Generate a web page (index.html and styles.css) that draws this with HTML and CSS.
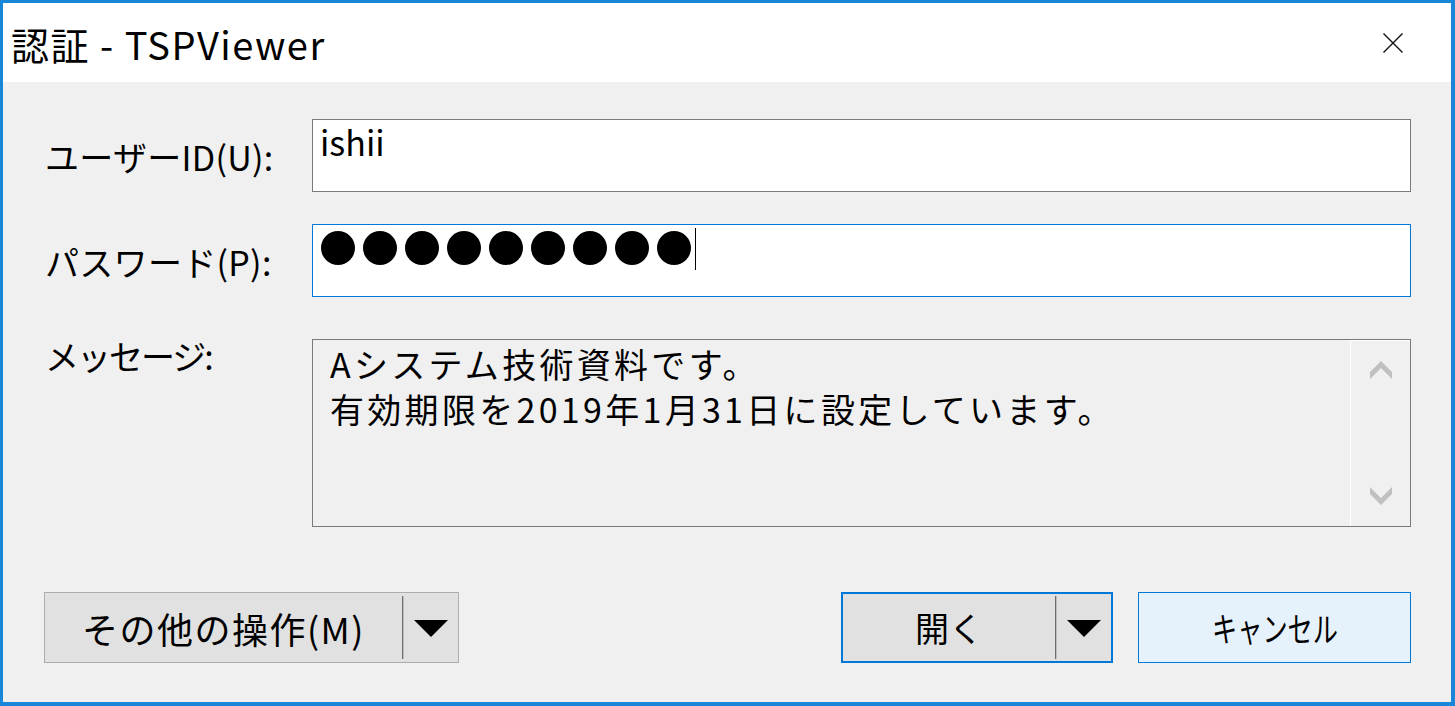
FILE: index.html
```html
<!DOCTYPE html>
<html lang="ja">
<head>
<meta charset="utf-8">
<title>認証 - TSPViewer</title>
<link rel="stylesheet" href="styles.css">
</head>
<body>
<div class="window">
  <div class="titlebar">
    <span class="title">認証 - TSPViewer</span>
    <span class="close">
      <svg width="20" height="20" viewBox="0 0 20 20"><path d="M0.5 0.5 L19.5 19.5 M19.5 0.5 L0.5 19.5" stroke="#111" stroke-width="1.4" fill="none"/></svg>
    </span>
  </div>
  <div class="content">
    <div class="form">
      <label class="label label-mid">ユーザーID(U):</label>
      <div class="field">ishii</div>
      <label class="label label-mid">パスワード(P):</label>
      <div class="field field-focus">
        <span class="dot"></span><span class="dot"></span><span class="dot"></span><span class="dot"></span><span class="dot"></span><span class="dot"></span><span class="dot"></span><span class="dot"></span><span class="dot"></span><span class="caret"></span>
      </div>
      <label class="label label-top">メッセージ:</label>
      <div class="message">
        <div class="message-text">
          <div class="msg-line">Aシステム技術資料です。</div>
          <div class="msg-line">有効期限を2019年1月31日に設定しています。</div>
        </div>
        <div class="scrollbar">
          <svg width="22" height="20" viewBox="0 0 22 20"><polygon points="0,12 11,1 22,12 22,19 11,8 0,19" fill="#c0c0c0"/></svg>
          <svg width="22" height="20" viewBox="0 0 22 20"><polygon points="0,1 11,12 22,1 22,8 11,19 0,8" fill="#c0c0c0"/></svg>
        </div>
      </div>
    </div>
    <div class="buttons">
      <div class="btn split btn-other">
        <span class="btn-main">その他の操作(M)</span>
        <span class="sep"></span>
        <span class="btn-arrow"><span class="tri"></span></span>
      </div>
      <div class="right-buttons">
        <div class="btn split btn-open">
          <span class="btn-main">開く</span>
          <span class="sep"></span>
          <span class="btn-arrow"><span class="tri"></span></span>
        </div>
        <div class="btn btn-cancel"><span class="cancel-text">キャンセル</span></div>
      </div>
    </div>
  </div>
</div>
</body>
</html>
```

FILE: styles.css
```css
* { box-sizing: border-box; }
html, body { margin: 0; padding: 0; }
body {
  font-family: "Noto Sans CJK JP", "Noto Sans", sans-serif;
  color: #000;
  background: #f0f0f0;
}
.window {
  width: 1455px;
  height: 706px;
  border-style: solid;
  border-color: #1a86d9;
  border-width: 3px 4px 4px 3px;
  display: flex;
  flex-direction: column;
  background: #f0f0f0;
}
.titlebar {
  height: 79px;
  background: #fff;
  display: flex;
  align-items: center;
  justify-content: space-between;
  padding-left: 8px;
  padding-right: 48px;
}
.title {
  font-size: 38px;
  line-height: 1;
  letter-spacing: 1.5px;
  margin-top: 2px;
}
.close { display: flex; }
.content {
  flex: 1;
  padding: 37px 40px 0 42px;
}
.form {
  display: grid;
  grid-template-columns: 267px 1099px;
  grid-template-rows: 73px 73px 198px;
  row-gap: 32px;
}
.form > :nth-child(5), .form > :nth-child(6) { margin-top: 10px; }
.label {
  font-size: 34px;
  line-height: 1;
}
.label-mid { align-self: center; margin-top: 2px; letter-spacing: 0.3px; }
.label-top { align-self: start; margin-top: 11px; letter-spacing: -2px; }
.field {
  background: #fff;
  border: 1px solid #7a7a7a;
  font-size: 34px;
  line-height: 1;
  padding: 5px 0 0 7px;
  display: flex;
  align-items: flex-start;
}
.field-focus {
  border-color: #0078d7;
  padding: 6px 0 0 8px;
}
.dot {
  width: 34px;
  height: 34px;
  border-radius: 50%;
  background: #000;
  margin-right: 8px;
  flex: none;
}
.caret {
  width: 1px;
  height: 42px;
  background: #000;
  margin-left: -4px;
  margin-top: -3px;
}
.message {
  height: 188px;
  border: 1px solid #7a7a7a;
  background: #f0f0f0;
  display: flex;
}
.message-text {
  flex: 1;
  font-size: 34px;
  padding: 1px 0 0 17px;
  letter-spacing: 3.3px;
  display: flex;
  flex-direction: column;
  gap: 0;
}
.msg-line {
  height: 45px;
  line-height: 45px;
}
.scrollbar {
  width: 60px;
  border-left: 1px solid #fff;
  border-top: 1px solid #fff;
  display: flex;
  flex-direction: column;
  justify-content: space-between;
  align-items: center;
  padding: 19px 0 20px 0;
}
.buttons {
  display: flex;
  justify-content: space-between;
  margin-top: 65px;
  margin-left: -1px;
}
.right-buttons {
  display: flex;
  gap: 25px;
}
.btn {
  height: 71px;
  background: #e1e1e1;
  border: 1px solid #adadad;
  font-size: 34px;
  line-height: 1;
  display: flex;
  align-items: center;
}
.split { padding: 2px 0; align-items: stretch; }
.btn-main {
  flex: 1;
  display: flex;
  align-items: center;
  justify-content: center;
}
.btn-other .btn-main { font-size: 36px; letter-spacing: 1.5px; }
.sep {
  width: 2px;
  background: #6d6d6d;
  border-right: 1px solid #bdbdbd;
  margin: 1px 0;
}
.btn-arrow {
  width: 54px;
  display: flex;
  align-items: center;
  justify-content: center;
}
.tri {
  width: 0;
  height: 0;
  border-left: 17px solid transparent;
  border-right: 17px solid transparent;
  border-top: 17px solid #000;
  margin-top: 2px;
}
.btn-other { width: 415px; }
.btn-open {
  width: 272px;
  border: 2px solid #0078d7;
  padding: 1px 0;
}
.btn-cancel {
  width: 273px;
  background: #e5f1fb;
  border: 1px solid #0078d7;
  justify-content: center;
}
.cancel-text {
  display: inline-block;
  transform: scaleX(0.74);
}
```
